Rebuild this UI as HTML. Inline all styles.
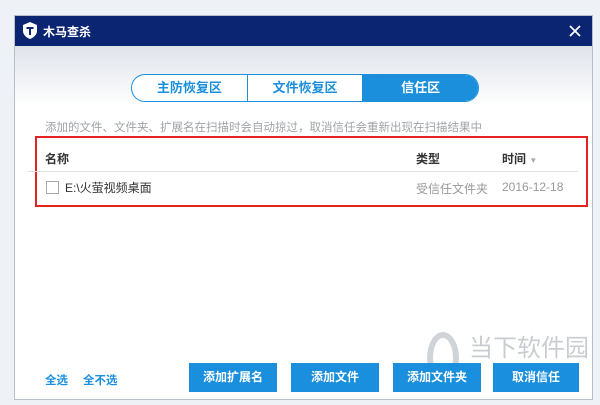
<!DOCTYPE html><html><head><meta charset="utf-8"><style>
body{margin:0;width:600px;height:405px;background:#eef1f5;position:relative;overflow:hidden;font-family:"Liberation Sans","Noto Sans CJK SC",sans-serif}
.win{position:absolute;left:14px;top:15px;width:579px;height:385px;background:#fff;border:1px solid #b9bfc8;box-sizing:border-box}
.tb{position:absolute;left:0;top:0;right:0;height:30px;background:#0c2572;color:#fff}
.grad{position:absolute;left:0;top:30px;right:0;height:60px;background:linear-gradient(#dfe3ea,#fff)}
.a{position:absolute}
.tabs{position:absolute;left:116px;top:58px;width:348px;height:28px;border:1px solid #1b8fdc;border-radius:15px;overflow:hidden;display:flex;background:#fff;box-sizing:border-box}
.tabs div{flex:1;text-align:center;line-height:26px;font-size:13px;font-weight:bold;color:#1b8fdc;border-left:1px solid #1b8fdc}
.tabs div:first-child{border-left:none}
.tabs .on{background:#1b8fdc;color:#fff}
.btn{position:absolute;top:347px;height:29px;width:88px;background:#1a8fde;color:#fff;font-size:12px;font-weight:bold;text-align:center;line-height:29px}
</style></head><body>
<div class="win">
<div class="grad"></div>
<div class="tb">
<svg class="a" style="left:8px;top:6px" width="14" height="17" viewBox="0 0 14 17"><path d="M7 0L14 3V9C14 13 10 16 7 17C4 16 0 13 0 9V3Z" fill="#fff"/><path d="M3.5 5H10.5V7H8V13H6V7H3.5Z" fill="#0c2572"/></svg>
<div class="a" style="left:28px;top:7px;font-size:12px;font-weight:bold">木马查杀</div>
<svg class="a" style="left:554px;top:9px" width="12" height="12" viewBox="0 0 12 12"><path d="M1 1L11 11M11 1L1 11" stroke="#fff" stroke-width="1.8"/></svg>
</div>
<div class="tabs"><div>主防恢复区</div><div>文件恢复区</div><div class="on">信任区</div></div>
<div class="a" style="left:30px;top:103px;font-size:11.5px;color:#a0a4a8">添加的文件、文件夹、扩展名在扫描时会自动掠过，取消信任会重新出现在扫描结果中</div>
<div class="a" style="left:20px;top:120px;width:553px;height:71px;border:2px solid #e52222;box-sizing:border-box"></div>
<div class="a" style="left:30px;top:134px;font-size:12px;font-weight:bold;color:#333">名称</div>
<div class="a" style="left:401px;top:134px;font-size:12px;font-weight:bold;color:#333">类型</div>
<div class="a" style="left:487px;top:134px;font-size:12px;font-weight:bold;color:#333">时间 <span style="color:#aaa;font-size:8px">▼</span></div>
<div class="a" style="left:13px;top:155px;width:550px;height:1px;background:#dde1e6"></div>
<div class="a" style="left:31px;top:165px;width:11px;height:11px;border:1px solid #aaa"></div>
<div class="a" style="left:50px;top:163px;font-size:12px;color:#333">E:\火萤视频桌面</div>
<div class="a" style="left:401px;top:164px;font-size:12px;color:#999">受信任文件夹</div>
<div class="a" style="left:487px;top:164px;font-size:12px;color:#999">2016-12-18</div>
<div class="a" style="left:30px;top:356px;font-size:11.5px;font-weight:bold;color:#1a8fde">全选</div>
<div class="a" style="left:68px;top:356px;font-size:11.5px;font-weight:bold;color:#1a8fde">全不选</div>
<div class="a" style="left:454px;top:312px;font-size:24px;color:#c9cdd1">当下软件园</div>
<div class="a" style="left:412px;top:316px;width:20px;height:40px;border:6px solid #d0d4d8;border-radius:50%"></div>
<div class="btn" style="left:174px">添加扩展名</div>
<div class="btn" style="left:276px">添加文件</div>
<div class="btn" style="left:378px">添加文件夹</div>
<div class="btn" style="left:478px;width:86px">取消信任</div>
</div>
</body></html>
